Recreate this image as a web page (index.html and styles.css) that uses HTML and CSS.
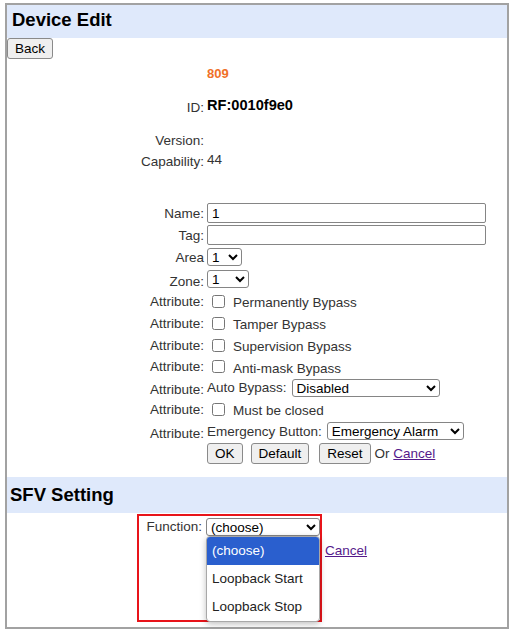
FILE: index.html
```html
<!DOCTYPE html>
<html>
<head>
<meta charset="utf-8">
<link rel="stylesheet" href="styles.css">
</head>
<body>
<div class="frame">
  <div class="band band-top"><h1 class="band-title">Device Edit</h1></div>
  <div class="back-row"><button class="btn">Back</button></div>
  <div class="form">
    <div class="row r-809"><span class="lbl"></span><span class="val v-809">809</span></div>
    <div class="row r-id"><span class="lbl lbl-id">ID:</span><span class="val v-id">RF:0010f9e0</span></div>
    <div class="row r-ver"><span class="lbl">Version:</span><span class="val"></span></div>
    <div class="row r-cap"><span class="lbl">Capability:</span><span class="val v-cap">44</span></div>
    <div class="row r-name h22"><span class="lbl">Name:</span><div class="val"><input class="txt" type="text" value="1"></div></div>
    <div class="row h22"><span class="lbl">Tag:</span><div class="val"><input class="txt" type="text" value=""></div></div>
    <div class="row h22"><span class="lbl lbl-low2">Area</span><div class="val"><select class="sel sel-area"><option>1</option></select></div></div>
    <div class="row h22"><span class="lbl lbl-low">Zone:</span><div class="val"><select class="sel sel-zone"><option>1</option></select></div></div>
    <div class="row h22"><span class="lbl">Attribute:</span><div class="val"><input class="chk" type="checkbox"><span class="opt">Permanently Bypass</span></div></div>
    <div class="row h22"><span class="lbl">Attribute:</span><div class="val"><input class="chk" type="checkbox"><span class="opt">Tamper Bypass</span></div></div>
    <div class="row h22"><span class="lbl">Attribute:</span><div class="val"><input class="chk" type="checkbox"><span class="opt">Supervision Bypass</span></div></div>
    <div class="row h21"><span class="lbl">Attribute:</span><div class="val"><input class="chk" type="checkbox"><span class="opt">Anti-mask Bypass</span></div></div>
    <div class="row h21"><span class="lbl lbl-low">Attribute:</span><div class="val"><span class="inl">Auto Bypass:</span><select class="sel sel-auto"><option>Disabled</option></select></div></div>
    <div class="row h22"><span class="lbl">Attribute:</span><div class="val"><input class="chk" type="checkbox"><span class="opt">Must be closed</span></div></div>
    <div class="row h22"><span class="lbl lbl-low">Attribute:</span><div class="val"><span class="inl">Emergency Button:</span><select class="sel sel-emg"><option>Emergency Alarm</option></select></div></div>
    <div class="row h22"><span class="lbl"></span><div class="val btns"><button class="btn">OK</button><button class="btn">Default</button><button class="btn btn-reset">Reset</button><span class="or">Or <a href="#" class="lnk">Cancel</a></span></div></div>
  </div>
  <div class="band band-sfv"><h2 class="band-title">SFV Setting</h2></div>
  <div class="redbox">
    <div class="frow r-fn"><span class="lbl">Function:</span><div class="val"><span class="sel-wrap"><select class="sel sel-fn"><option>(choose)</option><option>Loopback Start</option><option>Loopback Stop</option></select><div class="popup"><div class="popt active">(choose)</div><div class="popt">Loopback Start</div><div class="popt">Loopback Stop</div></div></span></div></div>
    <div class="frow r-fn2"><span class="lbl"></span><div class="val btns"><button class="btn btn-hidden" aria-label="OK"></button><a href="#" class="lnk lnk-fn">Cancel</a></div></div>
  </div>
</div>
</body>
</html>
```
FILE: styles.css
```css
html, body {
  margin: 0;
  padding: 0;
  background: #ffffff;
}
body {
  font-family: "Liberation Sans", Arial, sans-serif;
  font-size: 13.5px;
  color: #333333;
}
.frame {
  box-sizing: border-box;
  margin: 3px 0 0 5px;
  width: 504px;
  height: 626px;
  border: 2px solid #a2a2a2;
  display: flex;
  flex-direction: column;
}
.band {
  background: #dfe9fb;
  display: flex;
  align-items: center;
}
.band-top {
  height: 33px;
  padding-left: 5px;
}
.band-sfv {
  height: 36px;
  padding-left: 3px;
  margin-top: 13px;
}
.band-title {
  margin: 0;
  font-size: 18.5px;
  font-weight: bold;
  color: #000;
  line-height: 1;
}
.band-top .band-title { margin-bottom: 2px; }
.back-row {
  display: flex;
  height: 21px;
}
.btn {
  font-family: "Liberation Sans", Arial, sans-serif;
  font-size: 13.5px;
  color: #000;
  background: #efefef;
  border: 1px solid #8a8a8a;
  border-radius: 3px;
  padding: 0 7px;
  height: 21px;
  margin: 0;
  flex-shrink: 0;
}
.btn-reset { margin-left: 2px; }
.form {
  display: flex;
  flex-direction: column;
}
.row {
  display: grid;
  grid-template-columns: 197px 1fr;
  column-gap: 3px;
  align-items: center;
}
.lbl {
  text-align: right;
  white-space: nowrap;
}
.val {
  display: flex;
  align-items: center;
  white-space: nowrap;
  min-width: 0;
}
.r-809 { margin-top: 4px; height: 20px; }
.v-809 { color: #f07028; font-weight: bold; font-size: 13px; }
.r-id { margin-top: 12px; height: 20px; }
.lbl-id { padding-top: 4px; }
.v-id { color: #000; font-weight: bold; font-size: 14.6px; }
.r-ver { margin-top: 15px; height: 21px; }
.r-cap { height: 21px; }
.v-cap { padding-bottom: 4px; }
.r-name { margin-top: 30px; }
.h22 { height: 22px; }
.h21 { height: 21px; }
.lbl-low { padding-top: 4px; }
.lbl-low2 { padding-top: 1px; }
.txt {
  box-sizing: border-box;
  width: 279px;
  height: 20px;
  margin: 0;
  border: 1px solid #858585;
  border-radius: 2px;
  padding: 0 4px;
  font-family: "Liberation Sans", Arial, sans-serif;
  font-size: 13.5px;
  color: #000;
}
.sel {
  box-sizing: border-box;
  height: 18px;
  margin: 0;
  font-family: "Liberation Sans", Arial, sans-serif;
  font-size: 13.5px;
  color: #000;
  background: #fff;
  border: 1px solid #858585;
  border-radius: 3px;
}
.sel-area { width: 35px; }
.sel-zone { width: 42px; }
.sel-auto { width: 148px; margin-left: 5px; }
.sel-emg { width: 137px; margin-left: 5px; }
.sel-fn { width: 114px; }
.chk {
  width: 13px;
  height: 13px;
  margin: 0 8px 0 5px;
  flex-shrink: 0;
}
.opt { padding-top: 3px; }
.btns { gap: 8px; }
.or { color: #333; margin-left: -4px; }
.lnk { color: #551a8b; text-decoration: underline; flex-shrink: 0; }
.btn-hidden { width: 96px; }
.lnk-fn { margin-left: 15px; }
.redbox {
  box-sizing: border-box;
  margin: 1px 0 0 130px;
  width: 185px;
  height: 108px;
  border: 2px solid #e8141a;
  padding-top: 1px;
}
.frow {
  display: grid;
  grid-template-columns: 63px 1fr;
  column-gap: 4px;
  align-items: center;
}
.r-fn { height: 19px; }
.r-fn2 { height: 22px; margin-top: 3px; }
.sel-wrap {
  position: relative;
  display: inline-block;
  height: 18px;
}
.popup {
  position: absolute;
  left: 0;
  top: 18px;
  width: 114px;
  box-sizing: border-box;
  background: #fff;
  border: 1px solid #a8a8a8;
  border-radius: 4px;
  box-shadow: 0 2px 6px rgba(0, 0, 0, 0.25);
  overflow: hidden;
  z-index: 5;
}
.popt {
  height: 28px;
  line-height: 28px;
  padding-left: 5px;
  color: #222;
  font-size: 13.5px;
}
.popt.active {
  background: #2a5fce;
  color: #fff;
}
```
